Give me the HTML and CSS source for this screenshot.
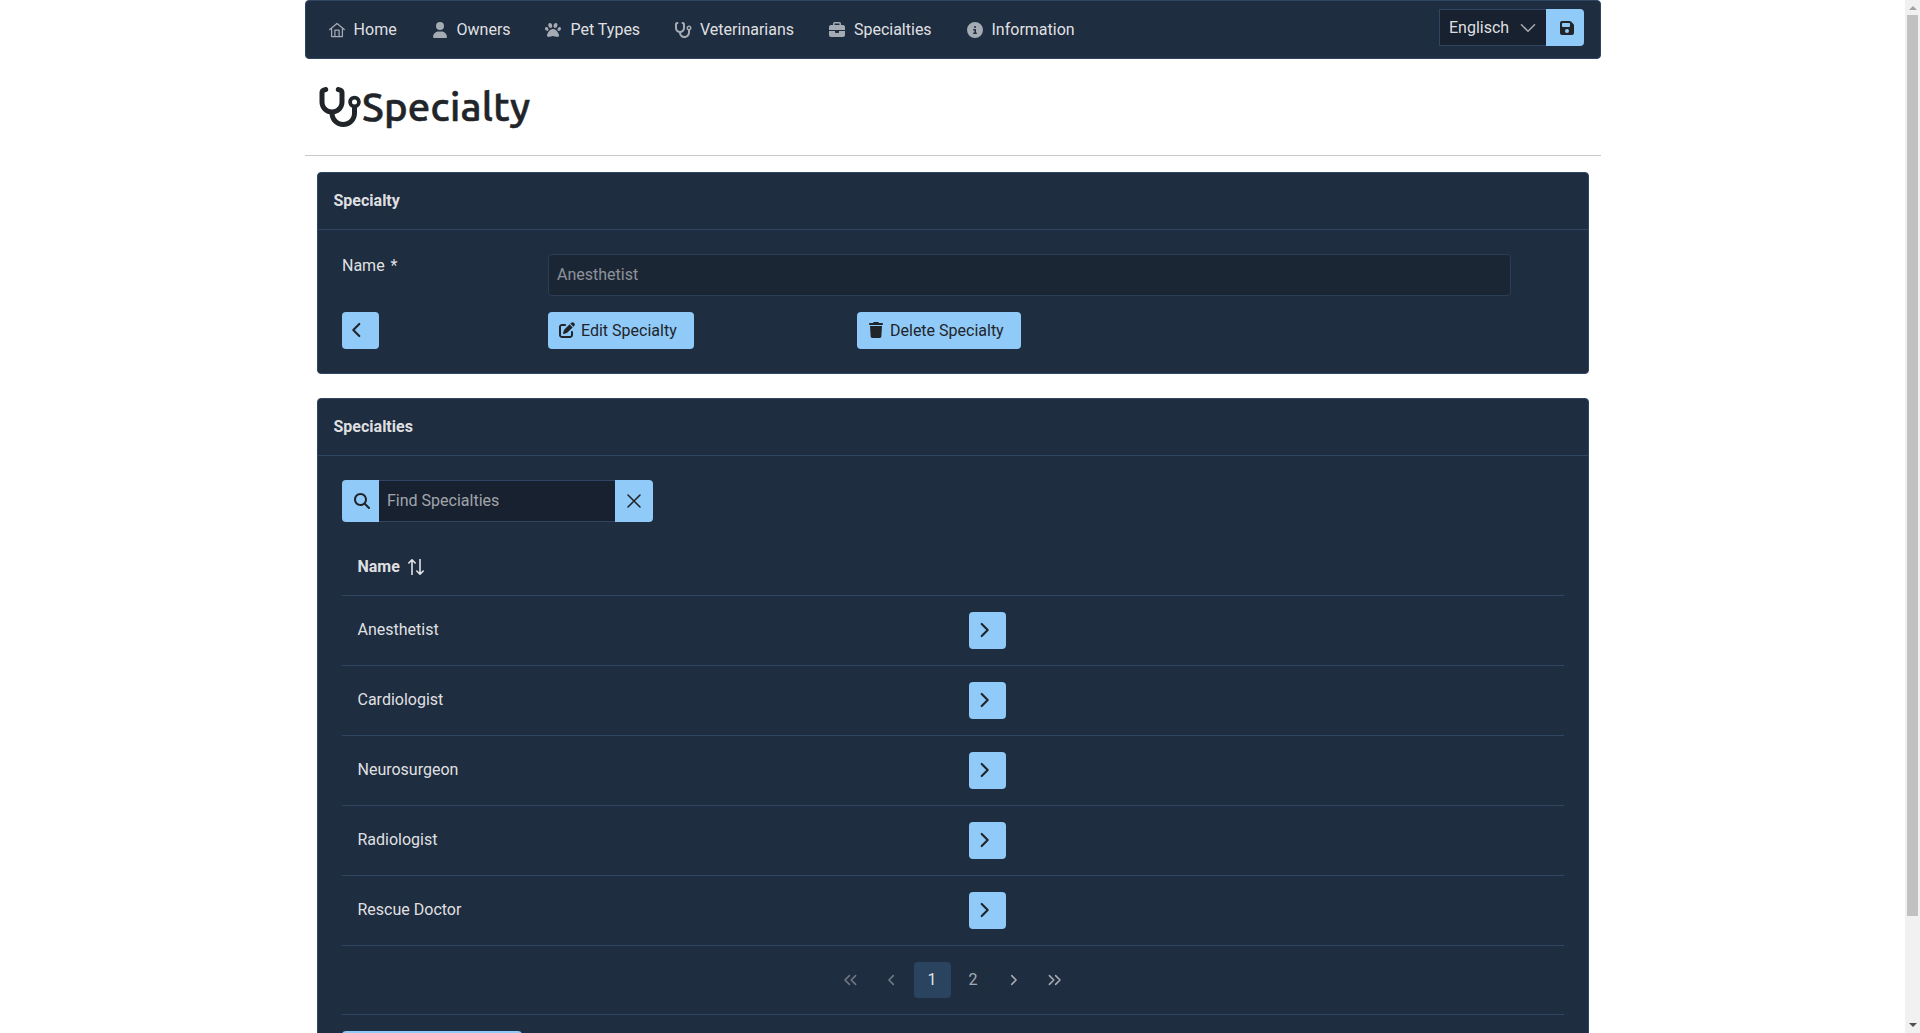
FILE: index.html
```html
<!DOCTYPE html>
<html lang="en">
<head>
<meta charset="utf-8">
<title>Specialty</title>
<link rel="stylesheet" href="styles.css">
</head>
<body>
<svg class="sprite" aria-hidden="true">
  <symbol id="home" viewBox="0 0 16 16"><path d="M.7 7.6 8 1.5l7.3 6.1M2.6 6.5v8h10.8v-8M5.9 14.5V8.1h4.2v6.4" fill="none" stroke="currentColor" stroke-width="1.25" stroke-linecap="round" stroke-linejoin="round"/></symbol>
  <symbol id="user" viewBox="0 0 448 512"><path d="M224 256A128 128 0 1 0 224 0a128 128 0 1 0 0 256zm-45.7 48C79.8 304 0 383.8 0 482.3C0 498.7 13.3 512 29.7 512l388.6 0c16.4 0 29.7-13.3 29.7-29.7C448 383.8 368.2 304 269.7 304l-91.4 0z"/></symbol>
  <symbol id="paw" viewBox="0 0 512 512"><path d="M226.500 92.900c14.300 42.900-.3 86.200-32.600 96.800s-70.100-15.600-84.400-58.500s.3-86.200 32.600-96.800s70.100 15.600 84.400 58.500zM100.400 198.600c18.900 32.400 14.300 70.100-10.200 84.100s-59.700-.9-78.500-33.300S-2.700 179.300 21.800 165.300s59.700 .9 78.500 33.300zM69.200 401.200C121.600 259.900 214.700 224 256 224s134.400 35.900 186.800 177.200c3.600 9.700 5.200 20.100 5.200 30.500l0 1.600c0 25.800-20.900 46.700-46.700 46.700c-11.500 0-22.900-1.400-34-4.200l-88-22c-15.300-3.800-31.300-3.800-46.600 0l-88 22c-11.100 2.800-22.500 4.200-34 4.200C84.900 480 64 459.100 64 433.300l0-1.600c0-10.400 1.600-20.800 5.200-30.500zM421.800 282.700c-24.500-14-29.100-51.700-10.200-84.100s54-47.300 78.500-33.300s29.100 51.700 10.200 84.100s-54 47.300-78.500 33.300zM310.100 189.700c-32.300-10.600-46.900-53.900-32.600-96.800s52.100-69.100 84.400-58.500s46.900 53.900 32.600 96.800s-52.100 69.100-84.400 58.500z"/></symbol>
  <symbol id="stethoscope" viewBox="0 0 576 512"><path d="M142.400 21.900c5.600 16.800-3.500 34.900-20.200 40.500L96 71.100 96 192c0 53 43 96 96 96s96-43 96-96l0-120.900-26.100-8.700c-16.800-5.600-25.800-23.700-20.200-40.500s23.700-25.800 40.500-20.200l26.100 8.700C334.400 19.100 352 43.500 352 71.100L352 192c0 77.200-54.600 141.600-127.300 156.700C231 404.600 278.400 448 336 448c61.900 0 112-50.100 112-112l0-70.700c-28.300-12.300-48-40.500-48-73.300c0-44.200 35.800-80 80-80s80 35.800 80 80c0 32.800-19.700 61-48 73.300l0 70.700c0 97.200-78.800 176-176 176c-92.900 0-168.900-71.900-175.500-163.100C87.200 334.200 32 269.600 32 192L32 71.100c0-27.500 17.600-52 43.800-60.700l26.100-8.700c16.800-5.600 34.900 3.500 40.500 20.200zM480 224a32 32 0 1 0 0-64 32 32 0 1 0 0 64z"/></symbol>
  <symbol id="briefcase" viewBox="0 0 512 512"><path d="M184 48l144 0c4.400 0 8 3.600 8 8l0 40L176 96l0-40c0-4.400 3.600-8 8-8zm-56 8l0 40L64 96C28.700 96 0 124.700 0 160l0 96 192 0 128 0 192 0 0-96c0-35.300-28.700-64-64-64l-64 0 0-40c0-30.900-25.100-56-56-56L184 0c-30.900 0-56 25.100-56 56zM512 288l-192 0 0 32c0 17.700-14.300 32-32 32l-64 0c-17.700 0-32-14.300-32-32l0-32L0 288 0 416c0 35.300 28.700 64 64 64l384 0c35.300 0 64-28.700 64-64l0-128z"/></symbol>
  <symbol id="info" viewBox="0 0 512 512"><path d="M256 512A256 256 0 1 0 256 0a256 256 0 1 0 0 512zM216 336l24 0 0-64-24 0c-13.300 0-24-10.700-24-24s10.700-24 24-24l48 0c13.300 0 24 10.700 24 24l0 88 8 0c13.300 0 24 10.700 24 24s-10.700 24-24 24l-80 0c-13.300 0-24-10.700-24-24s10.700-24 24-24zm40-208a32 32 0 1 1 0 64 32 32 0 1 1 0-64z"/></symbol>
  <symbol id="save" viewBox="0 0 448 512"><path d="M64 32C28.700 32 0 60.700 0 96L0 416c0 35.300 28.700 64 64 64l320 0c35.300 0 64-28.700 64-64l0-242.700c0-17-6.700-33.300-18.700-45.300L352 50.700C340 38.700 323.700 32 306.700 32L64 32zm0 96c0-17.700 14.300-32 32-32l192 0c17.700 0 32 14.300 32 32l0 64c0 17.700-14.300 32-32 32L96 224c-17.700 0-32-14.300-32-32l0-64zM224 288a64 64 0 1 1 0 128 64 64 0 1 1 0-128z"/></symbol>
  <symbol id="edit" viewBox="0 0 512 512"><path d="M471.600 21.700c-21.900-21.900-57.300-21.900-79.200 0L362.300 51.700l97.900 97.900 30.100-30.100c21.900-21.900 21.900-57.300 0-79.200L471.600 21.700zm-299.200 220c-6.100 6.100-10.800 13.600-13.500 21.900l-29.600 88.800c-2.900 8.600-.6 18.100 5.800 24.600s15.900 8.700 24.600 5.800l88.800-29.600c8.200-2.700 15.700-7.400 21.900-13.500L437.700 172.300 339.700 74.300 172.400 241.700zM96 64C43 64 0 107 0 160L0 416c0 53 43 96 96 96l256 0c53 0 96-43 96-96l0-96c0-17.700-14.300-32-32-32s-32 14.300-32 32l0 96c0 17.700-14.300 32-32 32L96 448c-17.700 0-32-14.300-32-32l0-256c0-17.700 14.300-32 32-32l96 0c17.700 0 32-14.300 32-32s-14.300-32-32-32L96 64z"/></symbol>
  <symbol id="trash" viewBox="0 0 448 512"><path d="M135.200 17.700L128 32 32 32C14.300 32 0 46.300 0 64S14.300 96 32 96l384 0c17.700 0 32-14.300 32-32s-14.300-32-32-32l-96 0-7.200-14.300C307.400 6.800 296.300 0 284.200 0L163.800 0c-12.100 0-23.200 6.800-28.600 17.700zM416 128L32 128 53.200 467c1.600 25.300 22.600 45 47.900 45l245.800 0c25.300 0 46.300-19.700 47.900-45L416 128z"/></symbol>
  <symbol id="search" viewBox="0 0 512 512"><path d="M416 208c0 45.900-14.900 88.300-40 122.700L502.600 457.400c12.500 12.500 12.500 32.800 0 45.300s-32.800 12.500-45.300 0L330.700 376c-34.400 25.200-76.800 40-122.700 40C93.100 416 0 322.900 0 208S93.100 0 208 0S416 93.100 416 208zM208 352a144 144 0 1 0 0-288 144 144 0 1 0 0 288z"/></symbol>
  <symbol id="times" viewBox="0 0 16 16"><path d="M2 2l12 12M14 2 2 14" class="line"/></symbol>
  <symbol id="down" viewBox="0 0 16 16"><path d="M1.500 4.700 8 11.300l6.500-6.600" class="line"/></symbol>
  <symbol id="left" viewBox="0 0 10 16"><path d="M8.300 1.900 2.300 8l6 6.100" class="line bold"/></symbol>
  <symbol id="right" viewBox="0 0 10 16"><path d="M1.700 1.900 7.700 8l-6 6.100" class="line bold"/></symbol>
  <symbol id="sort" viewBox="0 0 16 16"><path d="M4 15.500V.9M.8 4 4 .8 7.200 4M12 .5v14.600M8.800 12l3.200 3.200 3.200-3.200" class="line"/></symbol>
  <symbol id="pg-prev" viewBox="0 0 14 14"><path d="M9.300 2.600 4.900 7l4.400 4.400" class="line"/></symbol>
  <symbol id="pg-next" viewBox="0 0 14 14"><path d="M4.700 2.600 9.100 7l-4.400 4.400" class="line"/></symbol>
  <symbol id="pg-first" viewBox="0 0 14 14"><path d="M6.400 2.600 2 7l4.400 4.400M12.600 2.600 8.200 7l4.400 4.400" class="line"/></symbol>
  <symbol id="pg-last" viewBox="0 0 14 14"><path d="M1.400 2.600 5.800 7l-4.400 4.400M7.600 2.600 12 7l-4.400 4.400" class="line"/></symbol>
</svg>
<div class="viewport">
  <div class="page">
    <div class="container">
      <nav class="menubar">
        <a class="item"><svg class="icon"><use href="#home"/></svg>Home</a>
        <a class="item"><svg class="icon"><use href="#user"/></svg>Owners</a>
        <a class="item"><svg class="icon"><use href="#paw"/></svg>Pet Types</a>
        <a class="item"><svg class="icon"><use href="#stethoscope"/></svg>Veterinarians</a>
        <a class="item"><svg class="icon"><use href="#briefcase"/></svg>Specialties</a>
        <a class="item"><svg class="icon"><use href="#info"/></svg>Information</a>
        <div class="language">
          <div class="select">Englisch<svg><use href="#down"/></svg></div>
          <button class="btn save"><svg><use href="#save"/></svg></button>
        </div>
      </nav>
      <h1 class="title"><svg><use href="#stethoscope"/></svg><span>Specialty</span></h1>
      <section class="panel">
        <h2 class="panel-head">Specialty</h2>
        <div class="form">
          <label class="label">Name&nbsp;*</label>
          <div class="field">Anesthetist</div>
          <button class="btn square back"><svg class="chev"><use href="#left"/></svg></button>
          <button class="btn edit"><svg><use href="#edit"/></svg>Edit Specialty</button>
          <button class="btn delete"><svg><use href="#trash"/></svg>Delete Specialty</button>
        </div>
      </section>
      <section class="panel list">
        <h2 class="panel-head">Specialties</h2>
        <div class="content">
          <div class="search">
            <button class="btn find"><svg><use href="#search"/></svg></button>
            <div class="query">Find Specialties</div>
            <button class="btn clear"><svg><use href="#times"/></svg></button>
          </div>
          <div class="row head">Name<svg><use href="#sort"/></svg></div>
          <div class="row"><span>Anesthetist</span><button class="btn square"><svg class="chev"><use href="#right"/></svg></button></div>
          <div class="row"><span>Cardiologist</span><button class="btn square"><svg class="chev"><use href="#right"/></svg></button></div>
          <div class="row"><span>Neurosurgeon</span><button class="btn square"><svg class="chev"><use href="#right"/></svg></button></div>
          <div class="row"><span>Radiologist</span><button class="btn square"><svg class="chev"><use href="#right"/></svg></button></div>
          <div class="row"><span>Rescue Doctor</span><button class="btn square"><svg class="chev"><use href="#right"/></svg></button></div>
          <div class="paginator">
            <span class="pg off"><svg><use href="#pg-first"/></svg></span>
            <span class="pg off"><svg><use href="#pg-prev"/></svg></span>
            <span class="pg current">1</span>
            <span class="pg">2</span>
            <span class="pg"><svg><use href="#pg-next"/></svg></span>
            <span class="pg"><svg><use href="#pg-last"/></svg></span>
          </div>
          <div class="footer"><button class="btn add"></button></div>
        </div>
      </section>
    </div>
  </div>
  <div class="scrollbar"><i class="up"></i><i class="thumb"></i><i class="dn"></i></div>
</div>
</body>
</html>
```
FILE: styles.css
```css
* { box-sizing: border-box; }
body { margin: 0; background: #fff; font: 16px/24px Roboto, sans-serif; color: rgba(255,255,255,.87); overflow: hidden; }
svg { display: block; fill: currentColor; flex: none; }
.sprite { position: absolute; width: 0; height: 0; }
.line { fill: none; stroke: currentColor; stroke-width: 1.6; stroke-linecap: round; stroke-linejoin: round; }
.bold { stroke-width: 2.1; }
.viewport { display: flex; height: 1033px; overflow: hidden; }
.page { flex: 1; height: 1033px; overflow: hidden; }
.container { width: 1296px; margin-left: 305px; }

.menubar { display: flex; align-items: center; gap: 32.900px; height: 59px; padding: 0 16px 0 20.600px; background: #1f2d40; border: 1px solid #304562; border-radius: 4px; }
.item { display: flex; align-items: center; gap: 7px; white-space: nowrap; }
.icon { width: 20px; height: 16px; margin-top: 1px; color: rgba(255,255,255,.6); }
.language { display: flex; height: 37px; margin: 0 0 4px auto; }
.select { width: 107px; padding: 0 10px 0 9px; display: flex; align-items: center; justify-content: space-between; background: #17212f; border: 1px solid #304562; border-right: 0; }
.select svg { width: 16px; height: 16px; color: rgba(255,255,255,.6); }

.btn { display: flex; align-items: center; height: 37px; margin: 0; padding: 0; border: 0; border-radius: 4px; background: #90caf9; color: #212529; font: inherit; white-space: nowrap; }
.btn svg { width: 16px; height: 16px; }
.save { width: 38px; padding: 1px 0 0 13px; border-radius: 0 4px 4px 0; }
.square { width: 37px; padding: 0 0 1px 11px; }
.back { padding-left: 9px; }
.square .chev { width: 10px; }

.title { display: flex; align-items: center; height: 97px; margin: 0 0 16px; padding: 0 0 1px 12px; border-bottom: 1px solid #c8c9ca; color: #212529; font: 500 40px/48px Ubuntu, "Noto Sans", sans-serif; }
.title svg { width: 45px; height: 40px; }
.title span { letter-spacing: .25px; -webkit-text-stroke: .6px #212529; }

.panel { margin: 0 12px 24px; background: #1f2d40; border: 1px solid #304562; border-radius: 4px; }
.panel-head { height: 57px; margin: 0; padding: 16px 15.500px; border-bottom: 1px solid #304562; font: 700 16px/24px Roboto, sans-serif; }
.form { display: grid; grid-template-columns: 206px 309px 1fr; row-gap: 16px; padding: 24px 77px 24px 24px; }
.label { height: 24px; word-spacing: 2px; }
.field { grid-column: 2 / 4; height: 42px; padding: 8px; background: #1b2635; border: 1px solid #2b3d57; border-radius: 4px; color: rgba(255,255,255,.5); }
.edit { width: 146px; padding-left: 11px; gap: 6px; }
.delete { width: 164px; padding-left: 11px; gap: 6px; }
.edit svg, .delete svg { margin-bottom: 1px; }
.list { height: 720px; }
.content { padding: 24px; }
.search { display: flex; height: 42px; }
.search .btn { height: 42px; }
.find { width: 37px; padding-left: 12px; border-radius: 4px 0 0 4px; }
.query { width: 236px; padding: 8px; background: #17212f; border: solid #304562; border-width: 1px 0; color: rgba(255,255,255,.6); }
.clear { width: 38px; padding-left: 11px; border-radius: 0 4px 4px 0; }
.row { display: grid; grid-template-columns: 611.500px 1fr; height: 70px; padding: 16px 16px 16px 15.500px; border-bottom: 1px solid #304562; }
.row span { padding-top: 6px; }
.row.head { display: flex; align-items: center; gap: 8px; height: 58px; margin-top: 16px; font-weight: 700; }
.head svg { width: 16px; height: 16px; }
.paginator { display: flex; justify-content: center; gap: 4px; height: 69px; padding: 16px 1px 16px 0; border-bottom: 1px solid #304562; }
.pg { display: flex; align-items: center; justify-content: center; width: 37px; height: 36px; border-radius: 4px; color: rgba(255,255,255,.6); }
.pg svg { width: 14px; height: 14px; }
.off { opacity: .6; }
.current { background: #2a4460; color: rgba(255,255,255,.87); }
.footer { padding-top: 16px; }
.add { width: 180px; }

.scrollbar { display: flex; flex-direction: column; align-items: center; width: 15px; padding: 6px 0; background: #f1f1f1; }
.up, .dn { border: 4px solid transparent; width: 0; height: 0; border-top-width: 0; border-bottom: 4px solid #a3a3a3; }
.thumb { width: 11px; height: 901px; margin-top: 5px; background: #c1c1c1; }
.dn { margin-top: auto; border-bottom-width: 0; border-top: 4px solid #505050; }
```
